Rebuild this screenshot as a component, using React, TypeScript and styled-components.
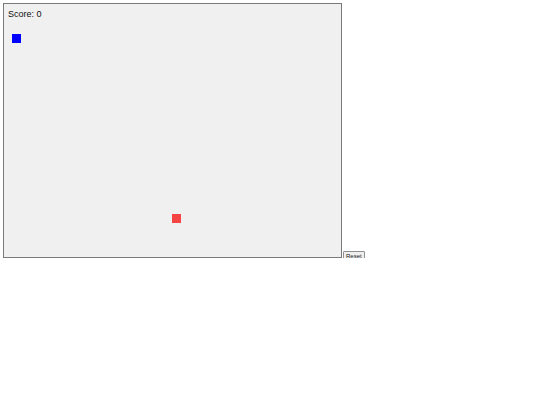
import styled, { createGlobalStyle } from 'styled-components'

const GlobalStyle = createGlobalStyle`
  body {
    margin: 3px;
    background: #ffffff;
    font-family: 'Liberation Sans', Arial, sans-serif;
  }
`

const Game = styled.div`
  display: flex;
  align-items: flex-end;
`

const Board = styled.div`
  position: relative;
  width: 337px;
  height: 253px;
  border: 1px solid #7a7a7a;
  background-color: #f0f0f0;
`

const Score = styled.div`
  padding: 5px 0 0 4px;
  font-size: 9px;
  color: #111;
`

const Cell = styled.div<{ $color: string }>`
  position: absolute;
  width: 9px;
  height: 9px;
  background-color: ${(p) => p.$color};
`

const ResetButton = styled.button`
  margin: 0 0 -3px 1px;
  padding: 0 2px;
  height: 10px;
  font-family: 'Liberation Sans', Arial, sans-serif;
  font-size: 6px;
  line-height: 8px;
  color: #222;
  background-color: #efefef;
  border: 1px solid #8f8f8f;
  border-radius: 1px;
`

const snake = [{ x: 8, y: 30 }]
const food = { x: 168, y: 210 }

export default function App() {
  return (
    <>
      <GlobalStyle />
      <Game>
        <Board>
          <Score>Score: 0</Score>
          {snake.map((s, i) => (
            <Cell key={i} $color="#0000ff" style={{ left: s.x, top: s.y }} />
          ))}
          <Cell $color="#f44444" style={{ left: food.x, top: food.y }} />
        </Board>
        <ResetButton>Reset</ResetButton>
      </Game>
    </>
  )
}
